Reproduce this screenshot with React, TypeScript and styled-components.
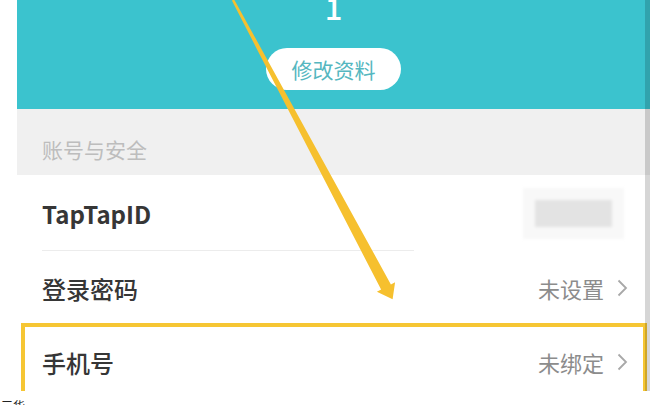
import React from 'react';
import styled, { createGlobalStyle } from 'styled-components';

const Global = createGlobalStyle`
  html, body {
    margin: 0;
    padding: 0;
    background: #fff;
  }
  body {
    font-family: "Noto Sans CJK SC", "Noto Sans", sans-serif;
  }
`;

const Page = styled.div`
  position: relative;
  width: 655px;
  height: 405px;
  overflow: hidden;
  background: #fff;
`;

const Screen = styled.div`
  position: relative;
  margin-left: 17px;
  width: 633px;
  height: 391px;
  overflow: hidden;
  background: #fff;
  display: flex;
  flex-direction: column;
`;

const Header = styled.div`
  height: 109px;
  flex: none;
  background: #3bc3ce;
  display: flex;
  flex-direction: column;
  align-items: center;
  box-sizing: border-box;
`;

const Name = styled.div`
  margin-top: -9px;
  font-size: 31px;
  line-height: 31px;
  font-weight: 500;
  color: #fff;
`;

const EditButton = styled.button`
  margin-top: 26px;
  width: 135px;
  height: 42px;
  border: none;
  border-radius: 21px;
  background: #fff;
  color: #55b7c0;
  font-family: inherit;
  font-size: 21px;
  padding: 0;
  display: flex;
  align-items: center;
  justify-content: center;
`;

const SectionTitle = styled.div`
  height: 66px;
  flex: none;
  box-sizing: border-box;
  background: #f0f0f0;
  padding: 14px 0 0 25px;
  display: flex;
  align-items: center;
  font-size: 21px;
  color: #bdbdbd;
`;

const Row = styled.div<{ $h: number; $left: number; $right: number }>`
  height: ${(p) => p.$h}px;
  flex: none;
  box-sizing: border-box;
  padding: 2px ${(p) => p.$right}px 0 ${(p) => p.$left}px;
  display: flex;
  align-items: center;
  justify-content: space-between;
`;

const Label = styled.span<{ $bold?: boolean }>`
  font-size: 24px;
  font-weight: ${(p) => (p.$bold ? 700 : 500)};
  color: #363636;
`;

const Value = styled.span`
  display: flex;
  align-items: center;
  gap: 13px;
  font-size: 22px;
  color: #8c8c8c;
`;

const Blurred = styled.span`
  width: 77px;
  height: 27px;
  margin-right: 16px;
  background: #e3e3e3;
  box-shadow: 0 0 0 12px #f8f8f8;
  filter: blur(1.5px);
`;

const Divider = styled.div`
  height: 1px;
  flex: none;
  width: 372px;
  margin-left: 25px;
  background: #ececec;
`;

const Highlight = styled.div`
  flex: none;
  margin: 0 3px 0 4px;
  border: 4px solid #f6c633;
  height: 76px;
`;

const ScrollBar = styled.div`
  position: absolute;
  right: 0;
  top: 0;
  width: 5px;
  height: 100%;
  background: rgba(0, 0, 0, 0.16);
`;

const Caption = styled.div`
  padding: 8px 0 0 1px;
  font-size: 12px;
  line-height: 14px;
  color: #222;
`;

const ArrowLayer = styled.svg`
  position: absolute;
  left: 0;
  top: 0;
  pointer-events: none;
`;

const Chevron = () => (
  <svg width="11" height="18" viewBox="0 0 11 18">
    <polyline points="1.5,1.5 9,9 1.5,16.5" fill="none" stroke="#a8a8a8" strokeWidth="1.8" />
  </svg>
);

export default function App() {
  return (
    <Page>
      <Global />
      <Screen>
        <Header>
          <Name>1</Name>
          <EditButton>修改资料</EditButton>
        </Header>
        <SectionTitle>账号与安全</SectionTitle>
        <Row $h={75} $left={25} $right={22}>
          <Label $bold>TapTapID</Label>
          <Blurred />
        </Row>
        <Divider />
        <Row $h={72} $left={25} $right={22}>
          <Label>登录密码</Label>
          <Value>
            未设置
            <Chevron />
          </Value>
        </Row>
        <Highlight>
          <Row $h={68} $left={17} $right={15}>
            <Label>手机号</Label>
            <Value>
              未绑定
              <Chevron />
            </Value>
          </Row>
        </Highlight>
        <ScrollBar />
      </Screen>
      <Caption>三华</Caption>
      <ArrowLayer width="655" height="405" viewBox="0 0 655 405">
        <polygon
          points="234.1,-0.6 390.9,284.4 395.1,282.2 392.6,299.3 376.9,291.8 381.1,289.6 231.9,0.6"
          fill="#f6c02e"
        />
      </ArrowLayer>
    </Page>
  );
}
